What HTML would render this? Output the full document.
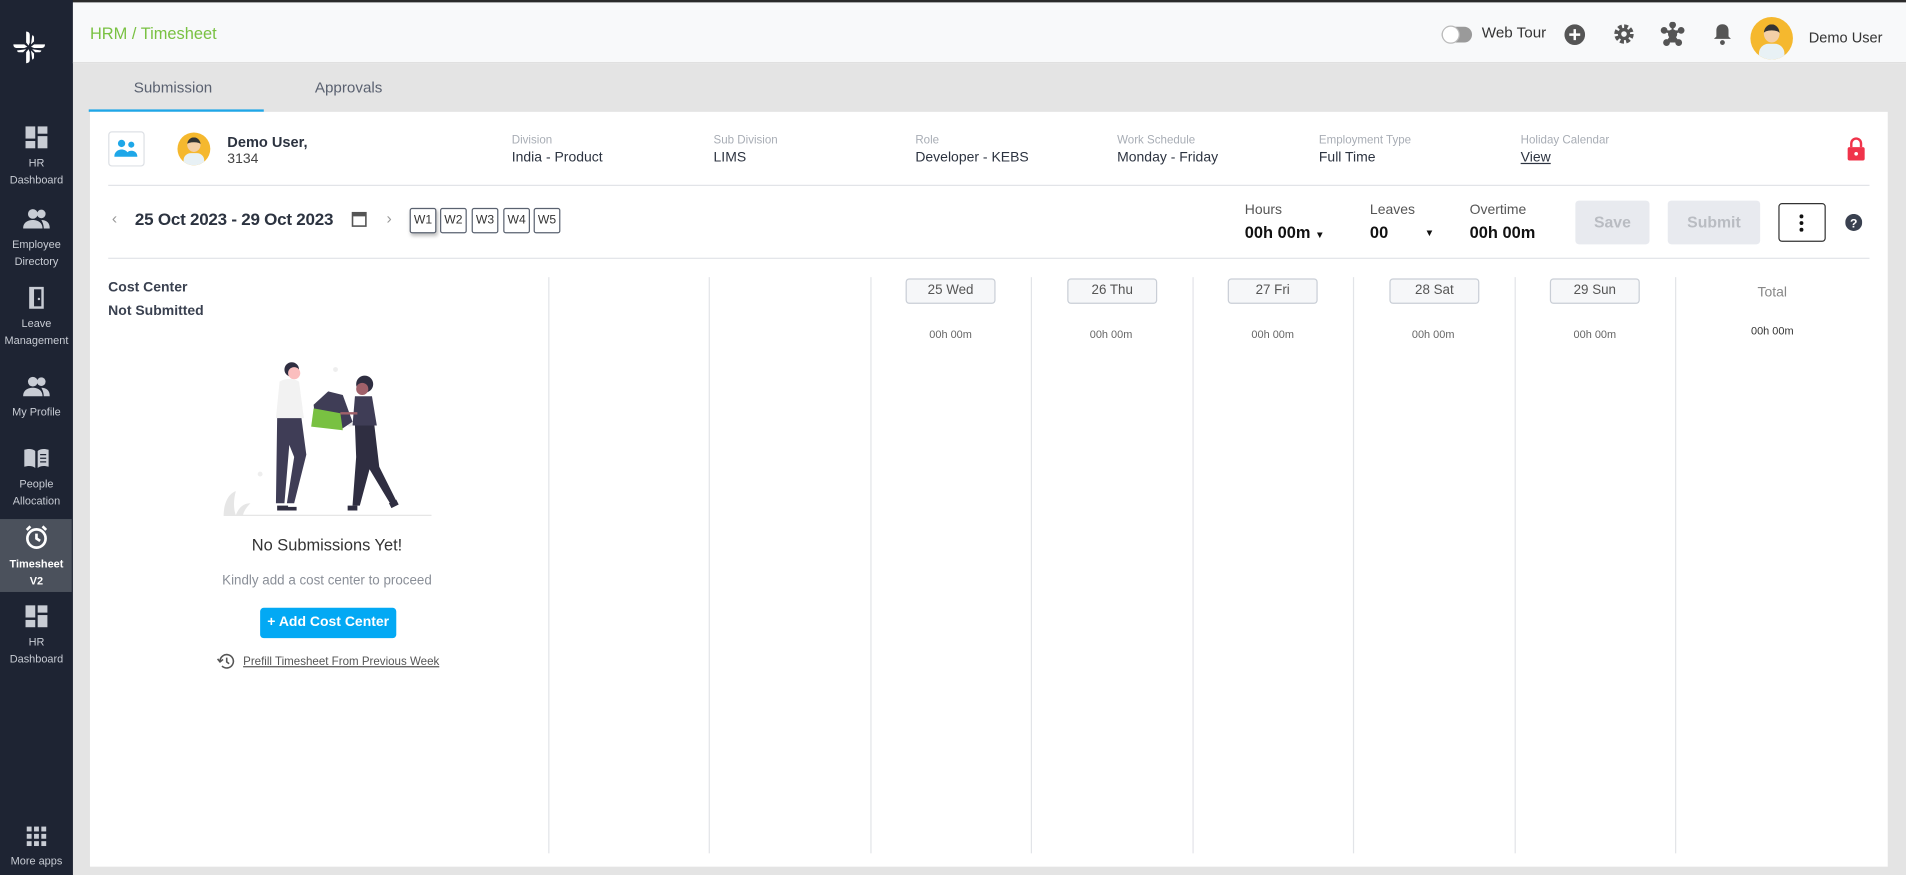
<!DOCTYPE html>
<html><head><meta charset="utf-8"><style>
*{box-sizing:border-box;margin:0;padding:0}
html,body{width:1906px;height:875px;overflow:hidden;background:#e4e4e4;font-family:"Liberation Sans",sans-serif}
#w{position:absolute;left:0;top:0;width:1568px;height:720px;transform:scale(1.21556);transform-origin:0 0;background:#e4e4e4}
.a{position:absolute;white-space:nowrap}
.sb{position:absolute;left:0;top:0;width:60px;height:720px;background:#1e2433}
.si{position:absolute;left:0;width:60px;text-align:center;color:#c8ccd4;font-size:9px;line-height:14px}
.si svg{display:block;margin:0 auto 4px}
.lbl{font-size:9.5px;color:#a8adb5}
.val{font-size:11.5px;color:#2c3340}
.wk{position:absolute;top:171px;width:22px;height:21px;border:1px solid #5a6270;border-radius:2px;font-size:10px;color:#333;text-align:center;line-height:19px;background:#fff}
.vl{position:absolute;top:228px;width:1px;height:474px;background:#e2e4e8}
.day{position:absolute;top:229px;width:74px;height:21px;border:1px solid #c9ced6;border-radius:3px;background:#f6f7f9;font-size:11px;color:#555;text-align:center;line-height:19px}
.hz{position:absolute;top:270px;width:132px;text-align:center;font-size:9px;color:#666}
</style></head><body><div id="w">
<div class="a" style="left:0;top:0;width:1568px;height:2px;background:#2b2b2b"></div>
<div class="sb">
 <svg class="a" style="left:10px;top:25px" width="28" height="28" viewBox="0 0 28 28" fill="#fff"><path d="M11.5 1c2 0 3 1 3 3v6l-1 2.5-2-2.5z M16.5 4c1 0 1.5 1 1.5 2v3l-2.5 2.5z M11.5 27c2 0 3-1 3-3v-6l-1-2.5-2 2.5z M16.5 24c1 0 1.5-1 1.5-2v-3l-2.5-2.5z M1 11.5c0 2 1 3 3 3h6l2.5-1-2.5-2z M4 16.5c0 1 1 1.5 2 1.5h3l2.5-2.5z M27 11.5c0 2-1 3-3 3h-6l-2.5-1 2.5-2z M24 16.5c0 1-1 1.5-2 1.5h-3l-2.5-2.5z"/></svg>
 <div class="si" style="top:103px"><svg width="20" height="20" viewBox="0 0 20 20" fill="#c8ccd4"><rect x="1" y="1" width="8" height="10"/><rect x="11" y="1" width="8" height="6"/><rect x="11" y="9" width="8" height="10"/><rect x="1" y="13" width="8" height="6"/></svg>HR<br>Dashboard</div>
 <div class="si" style="top:170px"><svg width="22" height="20" viewBox="0 0 22 20" fill="#c8ccd4"><circle cx="8" cy="6" r="4"/><circle cx="15" cy="6" r="3.5"/><path d="M0 18c0-5 4-7 8-7s8 2 8 7z M15 11c4 0 7 2 7 7h-5c0-3-1-5-2-7z"/></svg>Employee<br>Directory</div>
 <div class="si" style="top:235px"><svg width="18" height="20" viewBox="0 0 18 20" fill="#c8ccd4"><path d="M3 1h12v18H3z" /><rect x="7" y="3" width="6" height="14" fill="#1e2433"/><circle cx="11" cy="11" r="1" fill="#c8ccd4"/></svg>Leave<br>Management</div>
 <div class="si" style="top:308px"><svg width="22" height="20" viewBox="0 0 22 20" fill="#c8ccd4"><circle cx="8" cy="6" r="4"/><circle cx="15" cy="6" r="3.5"/><path d="M0 18c0-5 4-7 8-7s8 2 8 7z M15 11c4 0 7 2 7 7h-5c0-3-1-5-2-7z"/></svg>My Profile</div>
 <div class="si" style="top:367px"><svg width="22" height="20" viewBox="0 0 22 20" fill="#c8ccd4"><path d="M1 3c3-1 7-1 9 1v14c-2-2-6-2-9-1z M12 4c2-2 6-2 9-1v14c-3-1-7-1-9 1z"/><path d="M14 7h5M14 10h5M14 13h5" stroke="#1e2433" stroke-width="1"/></svg>People<br>Allocation</div>
 <div class="a" style="left:0;top:427px;width:59px;height:60px;background:#4b515c"></div>
 <div class="si" style="top:431px;color:#fff;font-weight:bold"><svg width="22" height="22" viewBox="0 0 22 22" fill="none" stroke="#fff" stroke-width="2.2"><circle cx="11" cy="12" r="7.5"/><path d="M11 8v4l3 2M3 5l3-3M19 5l-3-3"/></svg>Timesheet<br>V2</div>
 <div class="si" style="top:497px"><svg width="20" height="20" viewBox="0 0 20 20" fill="#c8ccd4"><rect x="1" y="1" width="8" height="10"/><rect x="11" y="1" width="8" height="6"/><rect x="11" y="9" width="8" height="10"/><rect x="1" y="13" width="8" height="6"/></svg>HR<br>Dashboard</div>
 <div class="si" style="top:679px"><svg width="18" height="18" viewBox="0 0 18 18" fill="#c8ccd4"><rect x="1" y="1" width="4" height="4"/><rect x="7" y="1" width="4" height="4"/><rect x="13" y="1" width="4" height="4"/><rect x="1" y="7" width="4" height="4"/><rect x="7" y="7" width="4" height="4"/><rect x="13" y="7" width="4" height="4"/><rect x="1" y="13" width="4" height="4"/><rect x="7" y="13" width="4" height="4"/><rect x="13" y="13" width="4" height="4"/></svg>More apps</div>
</div>
<div class="a" style="left:60px;top:2px;width:1508px;height:50px;background:#f8f9fa;border-bottom:1px solid #e0e0e0"></div>
<div class="a" style="left:74px;top:20px;font-size:13.5px;color:#79c142">HRM / Timesheet</div>
<div class="a" style="left:1186px;top:22px;width:25px;height:13px;border-radius:7px;background:#9a9a9a"></div>
<div class="a" style="left:1186px;top:21px;width:15px;height:15px;border-radius:50%;background:#fff;border:1px solid #bbb"></div>
<div class="a" style="left:1219px;top:20px;font-size:12.5px;color:#333">Web Tour</div>
<svg class="a" style="left:1287px;top:20px" width="17" height="17" viewBox="0 0 17 17"><circle cx="8.5" cy="8.5" r="8.5" fill="#555"/><path d="M8.5 4v9M4 8.5h9" stroke="#fff" stroke-width="2"/></svg>
<svg class="a" style="left:1327px;top:19px" width="18" height="18" viewBox="0 0 18 18"><circle cx="9" cy="9" r="6" fill="none" stroke="#555" stroke-width="4" stroke-dasharray="3 1.7"/><circle cx="9" cy="9" r="5" fill="#555"/><circle cx="9" cy="9" r="2.3" fill="#f8f9fa"/></svg>
<svg class="a" style="left:1366px;top:18px" width="20" height="20" viewBox="0 0 20 20" fill="#555" stroke="#555" stroke-width="1.6"><circle cx="10" cy="10" r="3"/><circle cx="10" cy="2.5" r="2"/><circle cx="3" cy="7" r="2"/><circle cx="17" cy="7" r="2"/><circle cx="5" cy="17" r="2"/><circle cx="15" cy="17" r="2"/><path d="M10 3v14M3 7l7 3 7-3M5 17l5-7 5 7"/></svg>
<svg class="a" style="left:1410px;top:19px" width="14" height="18" viewBox="0 0 14 18" fill="#555"><path d="M7 1c3 0 5 2 5 5v5l2 2H0l2-2V6c0-3 2-5 5-5z"/><circle cx="7" cy="16" r="2"/></svg>
<div class="a" style="left:1440px;top:14px;width:35px;height:35px;border-radius:50%;background:#f5b82e;overflow:hidden"><div class="a" style="left:11px;top:6px;width:13px;height:15px;border-radius:50%;background:#f3cfa8;border-top:5px solid #333"></div><div class="a" style="left:7px;top:22px;width:21px;height:15px;border-radius:8px 8px 0 0;background:#e8f1f5"></div></div>
<div class="a" style="left:1488px;top:24px;font-size:12px;color:#333">Demo User</div>
<div class="a" style="left:110px;top:65px;font-size:12.5px;color:#5a6170">Submission</div>
<div class="a" style="left:259px;top:65px;font-size:12.5px;color:#5a6170">Approvals</div>
<div class="a" style="left:73px;top:90px;width:144px;height:2px;background:#1ea7e8"></div>
<div class="a" style="left:74px;top:92px;width:1479px;height:621px;background:#fff"></div>
<div class="a" style="left:89px;top:108px;width:30px;height:29px;border:1px solid #dde0e5;border-radius:3px"></div>
<svg class="a" style="left:94px;top:114px" width="20" height="17" viewBox="0 0 20 17" fill="#1ea7e8"><circle cx="6" cy="4" r="3"/><circle cx="14" cy="5" r="2.5"/><path d="M0 15c0-4 3-6 6-6s6 2 6 6z M9 15c1-4 3-5 5-5s5 1 5 5z"/></svg>
<div class="a" style="left:146px;top:109px;width:27px;height:27px;border-radius:50%;background:#f5b82e;overflow:hidden"><div class="a" style="left:8px;top:4px;width:11px;height:12px;border-radius:50%;background:#f3cfa8;border-top:4px solid #333"></div><div class="a" style="left:5px;top:17px;width:17px;height:12px;border-radius:6px 6px 0 0;background:#e8f1f5"></div></div>
<div class="a" style="left:187px;top:110px;font-size:12px;font-weight:bold;color:#2c3340">Demo User,</div>
<div class="a" style="left:187px;top:125px;font-size:11.5px;color:#444">3134</div>
<div class="a lbl" style="left:421px;top:110px">Division</div><div class="a val" style="left:421px;top:124px">India - Product</div>
<div class="a lbl" style="left:587px;top:110px">Sub Division</div><div class="a val" style="left:587px;top:124px">LIMS</div>
<div class="a lbl" style="left:753px;top:110px">Role</div><div class="a val" style="left:753px;top:124px">Developer - KEBS</div>
<div class="a lbl" style="left:919px;top:110px">Work Schedule</div><div class="a val" style="left:919px;top:124px">Monday - Friday</div>
<div class="a lbl" style="left:1085px;top:110px">Employment Type</div><div class="a val" style="left:1085px;top:124px">Full Time</div>
<div class="a lbl" style="left:1251px;top:110px">Holiday Calendar</div><div class="a val" style="left:1251px;top:124px;text-decoration:underline">View</div>
<svg class="a" style="left:1519px;top:112px" width="16" height="21" viewBox="0 0 16 21"><path d="M4 9V6a4 4 0 0 1 8 0v3" fill="none" stroke="#f0334a" stroke-width="2"/><rect x="1" y="9" width="14" height="11" rx="1.5" fill="#f0334a"/><circle cx="8" cy="14.5" r="1.5" fill="#fff"/></svg>
<div class="a" style="left:89px;top:152px;width:1449px;height:1px;background:#e2e4e8"></div>
<div class="a" style="left:92px;top:172px;font-size:13px;color:#999">‹</div>
<div class="a" style="left:111px;top:172px;font-size:14px;font-weight:bold;color:#2c3340;letter-spacing:-0.2px">25 Oct 2023 - 29 Oct 2023</div>
<svg class="a" style="left:289px;top:173px" width="13" height="14" viewBox="0 0 13 14"><rect x="1" y="2" width="11" height="11" fill="none" stroke="#555" stroke-width="1.3"/><rect x="1" y="2" width="11" height="3" fill="#555"/></svg>
<div class="a" style="left:318px;top:172px;font-size:13px;color:#999">›</div>
<div class="wk" style="left:337px;box-shadow:1px 2px 3px rgba(0,0,0,.25)">W1</div><div class="wk" style="left:362px">W2</div><div class="wk" style="left:388px">W3</div><div class="wk" style="left:414px">W4</div><div class="wk" style="left:439px">W5</div>
<div class="a" style="left:1024px;top:167px;font-size:11.5px;color:#555">Hours</div>
<div class="a" style="left:1024px;top:184px;font-size:13.5px;font-weight:bold;color:#111">00h 00m <span style="font-size:8px">▼</span></div>
<div class="a" style="left:1127px;top:167px;font-size:11.5px;color:#555">Leaves</div>
<div class="a" style="left:1127px;top:184px;font-size:13.5px;font-weight:bold;color:#111">00</div>
<div class="a" style="left:1172px;top:187px;font-size:8px;color:#111">▼</div>
<div class="a" style="left:1209px;top:167px;font-size:11.5px;color:#555">Overtime</div>
<div class="a" style="left:1209px;top:184px;font-size:13.5px;font-weight:bold;color:#111">00h 00m</div>
<div class="a" style="left:1296px;top:165px;width:61px;height:36px;background:#e8eaef;border-radius:3px;color:#b9bcc2;font-size:13px;font-weight:bold;text-align:center;line-height:36px">Save</div>
<div class="a" style="left:1372px;top:165px;width:76px;height:36px;background:#e8eaef;border-radius:3px;color:#b9bcc2;font-size:13px;font-weight:bold;text-align:center;line-height:36px">Submit</div>
<div class="a" style="left:1463px;top:167px;width:39px;height:32px;border:1px solid #333;border-radius:3px"></div>
<svg class="a" style="left:1480px;top:176px" width="4" height="15" viewBox="0 0 4 15" fill="#111"><circle cx="2" cy="2" r="1.6"/><circle cx="2" cy="7.5" r="1.6"/><circle cx="2" cy="13" r="1.6"/></svg>
<svg class="a" style="left:1518px;top:176px" width="14" height="14" viewBox="0 0 14 14"><circle cx="7" cy="7" r="7" fill="#3a4150"/><text x="7" y="11" text-anchor="middle" font-size="10" font-weight="bold" fill="#fff" font-family="Liberation Sans">?</text></svg>
<div class="a" style="left:89px;top:212px;width:1449px;height:1px;background:#e2e4e8"></div>
<div class="vl" style="left:451px"></div><div class="vl" style="left:583px"></div><div class="vl" style="left:716px"></div><div class="vl" style="left:848px"></div><div class="vl" style="left:981px"></div><div class="vl" style="left:1113px"></div><div class="vl" style="left:1246px"></div><div class="vl" style="left:1378px"></div>
<div class="day" style="left:745px">25 Wed</div><div class="day" style="left:878px">26 Thu</div><div class="day" style="left:1010px">27 Fri</div><div class="day" style="left:1143px">28 Sat</div><div class="day" style="left:1275px">29 Sun</div>
<div class="hz" style="left:716px">00h 00m</div><div class="hz" style="left:848px">00h 00m</div><div class="hz" style="left:981px">00h 00m</div><div class="hz" style="left:1113px">00h 00m</div><div class="hz" style="left:1246px">00h 00m</div>
<div class="a" style="left:1378px;top:235px;width:160px;text-align:center;font-size:11.5px;color:#888">Total</div>
<div class="hz" style="left:1392px;top:267px;color:#333">00h 00m</div>
<div class="a" style="left:89px;top:231px;font-size:11.5px;font-weight:bold;color:#3a4150">Cost Center</div>
<div class="a" style="left:89px;top:250px;font-size:11.5px;font-weight:bold;color:#3a4150">Not Submitted</div>
<svg class="a" style="left:180px;top:292px" width="180" height="136" viewBox="0 0 180 136">
 <path d="M4 132c0-10 4-18 10-20-2 8-2 14 0 20z M14 132c2-6 6-10 12-10-4 4-6 8-6 10z" fill="#e6e6e6"/>
 <line x1="4" y1="132" x2="175" y2="132" stroke="#e6e6e6" stroke-width="1"/>
 <circle cx="34" cy="98" r="2" fill="#eee"/><circle cx="108" cy="57" r="2" fill="#eee"/><circle cx="96" cy="12" r="2" fill="#eee"/>
 <circle cx="60" cy="12" r="6" fill="#2f2e41"/><circle cx="62" cy="15" r="5" fill="#fbbebe"/>
 <path d="M50 22c4-3 12-3 16 0l4 30H47z" fill="#f2f2f2"/>
 <path d="M48 52h20l4 30-10 40h-6l6-38-4-10-4 48h-7z" fill="#3f3d56"/>
 <path d="M90 30l12 3 8 22-9 6-21-2-2-18z" fill="#3f3d56"/>
 <path d="M78 44l22 4 2 14-26-3z" fill="#79c142"/>
 <circle cx="120" cy="24" r="7" fill="#2f2e41"/><circle cx="118" cy="28" r="5" fill="#a0616a"/>
 <path d="M112 34h14l4 24h-20z" fill="#3f3d56"/>
 <path d="M112 58h16l4 34 15 30-5 2-18-30-8 30h-6l3-40z" fill="#2f2e41"/>
 <path d="M100 48h14" stroke="#a0616a" stroke-width="2"/>
 <path d="M48 124h9v4h-9z M56 125h8v3h-8z M106 124h8v4h-8z M140 122l6-3 2 4-6 3z" fill="#2f2e41"/>
</svg>
<div class="a" style="left:169px;top:441px;width:200px;text-align:center;font-size:13.5px;color:#333">No Submissions Yet!</div>
<div class="a" style="left:149px;top:472px;width:240px;text-align:center;font-size:11px;color:#8a8f98">Kindly add a cost center to proceed</div>
<div class="a" style="left:214px;top:500px;width:112px;height:25px;background:#03a9f4;border-radius:3px;color:#fff;font-size:11.5px;font-weight:bold;text-align:center;line-height:25px">+ Add Cost Center</div>
<svg class="a" style="left:178px;top:537px" width="15" height="14" viewBox="0 0 15 14" fill="none" stroke="#555" stroke-width="1.3"><path d="M3 7a5.5 5.5 0 1 1 1.6 3.9"/><path d="M1 5l2 2.5 2.5-2"/><path d="M8.5 4v3.5l2 1.5"/></svg>
<div class="a" style="left:200px;top:539px;font-size:9.5px;color:#555;text-decoration:underline">Prefill Timesheet From Previous Week</div>
</div></body></html>
